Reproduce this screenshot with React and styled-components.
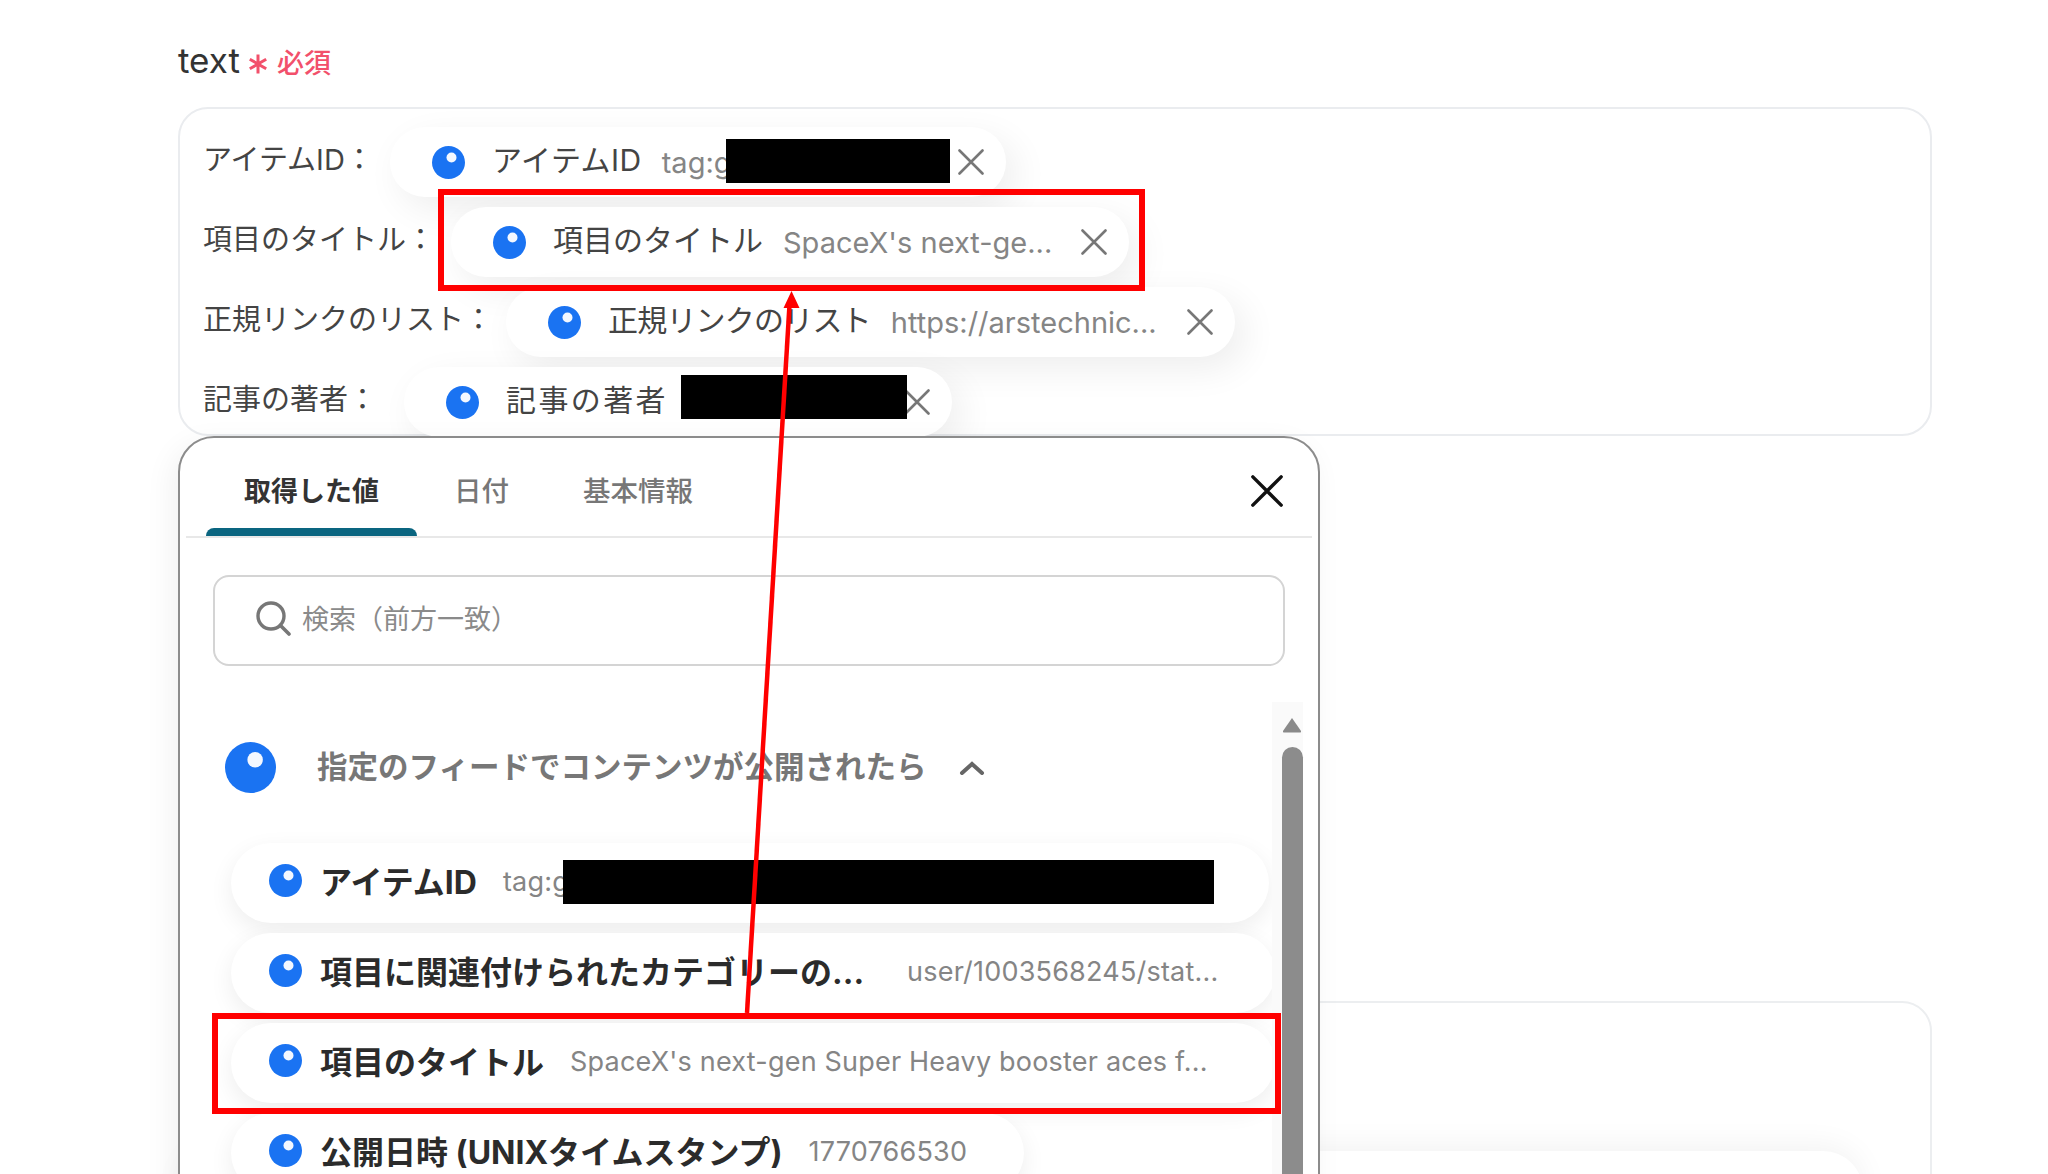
import styled, { createGlobalStyle } from "styled-components";

const GlobalStyle = createGlobalStyle`
  html, body {
    margin: 0;
    padding: 0;
    background: #fff;
  }
  * {
    box-sizing: border-box;
  }
`;

const FONT = `Inter, "Noto Sans CJK JP", "Noto Sans", sans-serif`;

function Dot({ size = 33 }) {
  return (
    <DotIcon viewBox="0 0 33 33" $size={size}>
      <circle cx="16.5" cy="16.5" r="16.5" fill="#1a73f2" />
      <circle cx="19.5" cy="11.5" r="5" fill="#f4f8ff" />
    </DotIcon>
  );
}

function CloseIcon({ size = 26, color = "#777", weight = 2.6 }) {
  return (
    <CloseSvg viewBox="0 0 26 26" $size={size}>
      <path d="M1.5 1.5 L24.5 24.5 M24.5 1.5 L1.5 24.5" stroke={color} strokeWidth={weight} strokeLinecap="round" fill="none" />
    </CloseSvg>
  );
}

const chips = [
  { label: "アイテムID：", name: "アイテムID", value: "tag:g", width: 268, labelWidth: 187, spacing: 0.5 },
  { label: "項目のタイトル：", name: "項目のタイトル", value: "SpaceX's next-ge...", width: 270, labelWidth: 248, spacing: 0 },
  { label: "正規リンクのリスト：", name: "正規リンクのリスト", value: "https://arstechnic...", width: 268, labelWidth: 303, spacing: -0.8 },
  { label: "記事の著者：", name: "記事の著者", value: "", width: 188, labelWidth: 201, spacing: 2.4 },
];

const items = [
  { name: "アイテムID", value: "tag:g", wide: false, gap: 26 },
  { name: "項目に関連付けられたカテゴリーの...", value: "user/1003568245/stat...", wide: true, gap: 43 },
  { name: "項目のタイトル", value: "SpaceX's next-gen Super Heavy booster aces f...", wide: true, gap: 26 },
  { name: "公開日時 (UNIXタイムスタンプ)", value: "1770766530", wide: false, gap: 26 },
];

export default function App() {
  return (
    <Page>
      <GlobalStyle />
      <FieldLabel>
        <FieldName>text</FieldName>
        <RequiredMark viewBox="0 0 20 20">
          <path d="M10 0.5 V19.5 M1.8 5.2 L18.2 14.8 M18.2 5.2 L1.8 14.8" stroke="#f2506b" strokeWidth="3" fill="none" />
        </RequiredMark>
        <RequiredText>必須</RequiredText>
      </FieldLabel>

      <FieldCard>
        {chips.map((chip) => (
          <ChipRow key={chip.name}>
            <RowLabel $width={chip.labelWidth}>{chip.label}</RowLabel>
            <Chip>
              <Dot />
              <ChipName $spacing={chip.spacing}>{chip.name}</ChipName>
              <ChipValue $width={chip.width}>{chip.value}</ChipValue>
              <CloseIcon />
            </Chip>
          </ChipRow>
        ))}
      </FieldCard>

      <SecondCard>
        <GhostChip />
      </SecondCard>

      <Panel>
        <PanelHead>
          <Tab $active>取得した値</Tab>
          <Tab>日付</Tab>
          <Tab>基本情報</Tab>
          <PanelClose>
            <CloseIcon size={32} color="#111" weight={2.8} />
          </PanelClose>
        </PanelHead>

        <SearchBox>
          <SearchIcon viewBox="0 0 36 36">
            <circle cx="16" cy="16" r="13" stroke="#777" strokeWidth="3.4" fill="none" />
            <path d="M25.5 25.5 L34 34" stroke="#777" strokeWidth="3.6" strokeLinecap="round" />
          </SearchIcon>
          <Placeholder>検索（前方一致）</Placeholder>
        </SearchBox>

        <PanelBody>
          <ListArea>
            <GroupHead>
              <Dot size={51} />
              <GroupTitle>指定のフィードでコンテンツが公開されたら</GroupTitle>
              <Chevron viewBox="0 0 26 14">
                <path d="M3 12 L13 3 L23 12" stroke="#666" strokeWidth="4" fill="none" strokeLinecap="round" />
              </Chevron>
            </GroupHead>
            <ItemList>
              {items.map((item) => (
                <Item key={item.name} $wide={item.wide}>
                  <Dot />
                  <ItemName $gap={item.gap}>{item.name}</ItemName>
                  <ItemValue>{item.value}</ItemValue>
                </Item>
              ))}
            </ItemList>
          </ListArea>
          <ScrollTrack>
            <ScrollUp viewBox="0 0 20 16">
              <path d="M10 1 L19 14 Q19.5 15.5 18 15.5 H2 Q0.5 15.5 1 14 Z" fill="#8a8a8a" />
            </ScrollUp>
            <ScrollThumb />
          </ScrollTrack>
        </PanelBody>
      </Panel>

      <Redact $x={726} $y={139} $w={224} $h={44} />
      <Redact $x={681} $y={375} $w={226} $h={44} />
      <Redact $x={563} $y={860} $w={651} $h={44} />

      <RedBox $x={438} $y={189} $w={707} $h={102} />
      <RedBox $x={212} $y={1013} $w={1069} $h={101} />

      <ArrowLayer viewBox="0 0 2048 1174">
        <path d="M747 1013 L789.5 305" stroke="#ff0000" strokeWidth="4.5" fill="none" />
        <path d="M791.5 291 L799.5 308 L783.5 308 Z" fill="#ff0000" />
      </ArrowLayer>
    </Page>
  );
}

const Page = styled.div`
  position: relative;
  width: 2048px;
  height: 1174px;
  overflow: hidden;
  background: #fff;
  padding: 40px 116px 0 178px;
  font-family: ${FONT};
`;

const FieldLabel = styled.div`
  display: flex;
  align-items: center;
  height: 40px;
  margin-bottom: 27px;
`;

const FieldName = styled.span`
  font-size: 35px;
  color: #333;
  margin-right: 8px;
`;

const RequiredMark = styled.svg`
  width: 20px;
  height: 20px;
  margin-right: 9px;
  margin-top: 8px;
`;

const RequiredText = styled.span`
  font-size: 27px;
  font-weight: 500;
  color: #f2506b;
  margin-top: 2px;
`;

const FieldCard = styled.div`
  height: 329px;
  border: 2px solid #eaecef;
  border-radius: 30px;
  padding: 18px 23px 0;
  display: flex;
  flex-direction: column;
  gap: 10px;
`;

const ChipRow = styled.div`
  display: flex;
  align-items: center;
  height: 70px;
`;

const RowLabel = styled.span`
  flex-shrink: 0;
  width: ${(p) => p.$width}px;
  font-size: 29px;
  color: #444;
  white-space: nowrap;
  margin-bottom: 10px;
`;

const Chip = styled.div`
  height: 70px;
  display: flex;
  align-items: center;
  padding: 0 22px 0 42px;
  border-radius: 35px;
  background: #fff;
  box-shadow: 10px 12px 36px rgba(0, 0, 0, 0.07);
`;

const DotIcon = styled.svg`
  width: ${(p) => p.$size}px;
  height: ${(p) => p.$size}px;
  flex-shrink: 0;
`;

const CloseSvg = styled.svg`
  width: ${(p) => p.$size}px;
  height: ${(p) => p.$size}px;
  flex-shrink: 0;
`;

const ChipName = styled.span`
  font-size: 30px;
  color: #444;
  margin: 0 20px 8px 27px;
  letter-spacing: ${(p) => p.$spacing}px;
  white-space: nowrap;
`;

const ChipValue = styled.span`
  width: ${(p) => p.$width}px;
  margin-right: 28px;
  font-size: 29px;
  color: #858585;
  white-space: nowrap;
`;

const SecondCard = styled.div`
  height: 300px;
  margin-top: 565px;
  border: 2px solid #eceef0;
  border-radius: 30px;
  padding: 148px 67px 0 0;
`;

const GhostChip = styled.div`
  height: 80px;
  border-radius: 40px;
  background: #fff;
  box-shadow: 0 -6px 30px rgba(0, 0, 0, 0.05);
`;

const Panel = styled.div`
  position: absolute;
  left: 178px;
  top: 436px;
  width: 1142px;
  height: 800px;
  background: #fff;
  border: 2px solid #8c8c8c;
  border-radius: 36px;
  box-shadow: -6px 8px 30px rgba(0, 0, 0, 0.06);
  padding: 0 6px;
  display: flex;
  flex-direction: column;
  z-index: 2;
`;

const PanelHead = styled.div`
  display: flex;
  align-items: stretch;
  height: 100px;
  padding-left: 20px;
  border-bottom: 2px solid #e8e8e8;
`;

const Tab = styled.div`
  position: relative;
  display: flex;
  align-items: center;
  padding: 4px ${(p) => (p.$active ? 38 : 37)}px 0;
  font-size: ${(p) => (p.$active ? 27 : 27.5)}px;
  font-weight: ${(p) => (p.$active ? 700 : 500)};
  color: ${(p) => (p.$active ? "#333" : "#777")};

  &::after {
    content: "";
    display: ${(p) => (p.$active ? "block" : "none")};
    position: absolute;
    left: 0;
    right: 0;
    bottom: 0;
    height: 8px;
    border-radius: 8px 8px 0 0;
    background: #0a6580;
  }
`;

const PanelClose = styled.div`
  margin-left: auto;
  margin-right: 29px;
  margin-top: 37px;
`;

const SearchBox = styled.div`
  display: flex;
  align-items: center;
  gap: 11px;
  height: 91px;
  margin: 37px 27px 0 27px;
  padding-left: 40px;
  border: 2px solid #d4d4d4;
  border-radius: 16px;
`;

const SearchIcon = styled.svg`
  width: 36px;
  height: 36px;
  margin-bottom: 5px;
`;

const Placeholder = styled.span`
  font-size: 27px;
  color: #8a8a8a;
  margin-bottom: 6px;
`;

const PanelBody = styled.div`
  display: flex;
  flex: 1;
  margin-top: 36px;
  min-height: 0;
`;

const ListArea = styled.div`
  flex: 1;
  min-width: 0;
  padding: 40px 0 0 39px;
`;

const GroupHead = styled.div`
  display: flex;
  align-items: center;
  height: 51px;
`;

const GroupTitle = styled.span`
  margin: 0 0 5px 41px;
  font-size: 30.5px;
  font-weight: 700;
  color: #777;
  white-space: nowrap;
`;

const Chevron = styled.svg`
  width: 26px;
  height: 14px;
  margin-left: 33px;
`;

const ItemList = styled.div`
  display: flex;
  flex-direction: column;
  align-items: flex-start;
  gap: 10px;
  margin-top: 50px;
  margin-left: 6px;
`;

const Item = styled.div`
  display: flex;
  align-items: center;
  height: 80px;
  padding: 0 57px 6px 38px;
  min-width: ${(p) => (p.$wide ? "1044px" : "0")};
  border-radius: 40px;
  background: #fff;
  box-shadow: 0 8px 24px rgba(0, 0, 0, 0.07);

  &:first-child {
    width: 1038px;
  }
`;

const ItemName = styled.span`
  margin: 0 ${(p) => p.$gap}px 0 18px;
  font-size: 32px;
  font-weight: 700;
  color: #2b2b2b;
  white-space: nowrap;
`;

const ItemValue = styled.span`
  margin-top: 3px;
  font-size: 27px;
  letter-spacing: 0.2px;
  color: #858585;
  white-space: nowrap;
`;

const ScrollTrack = styled.div`
  width: 31px;
  margin-right: 9px;
  padding: 15px 1px 0 10px;
  background: #fafafa;
  display: flex;
  flex-direction: column;
  align-items: center;
  gap: 14px;
  flex-shrink: 0;
`;

const ScrollUp = styled.svg`
  width: 20px;
  height: 16px;
`;

const ScrollThumb = styled.div`
  width: 21px;
  flex: 1;
  border-radius: 11px 11px 0 0;
  background: #8c8c8c;
`;

const Redact = styled.div`
  position: absolute;
  left: ${(p) => p.$x}px;
  top: ${(p) => p.$y}px;
  width: ${(p) => p.$w}px;
  height: ${(p) => p.$h}px;
  background: #000;
  z-index: 3;
`;

const RedBox = styled.div`
  position: absolute;
  left: ${(p) => p.$x}px;
  top: ${(p) => p.$y}px;
  width: ${(p) => p.$w}px;
  height: ${(p) => p.$h}px;
  border: 6px solid #ff0000;
  z-index: 4;
`;

const ArrowLayer = styled.svg`
  position: absolute;
  left: 0;
  top: 0;
  width: 2048px;
  height: 1174px;
  z-index: 5;
  pointer-events: none;
`;
